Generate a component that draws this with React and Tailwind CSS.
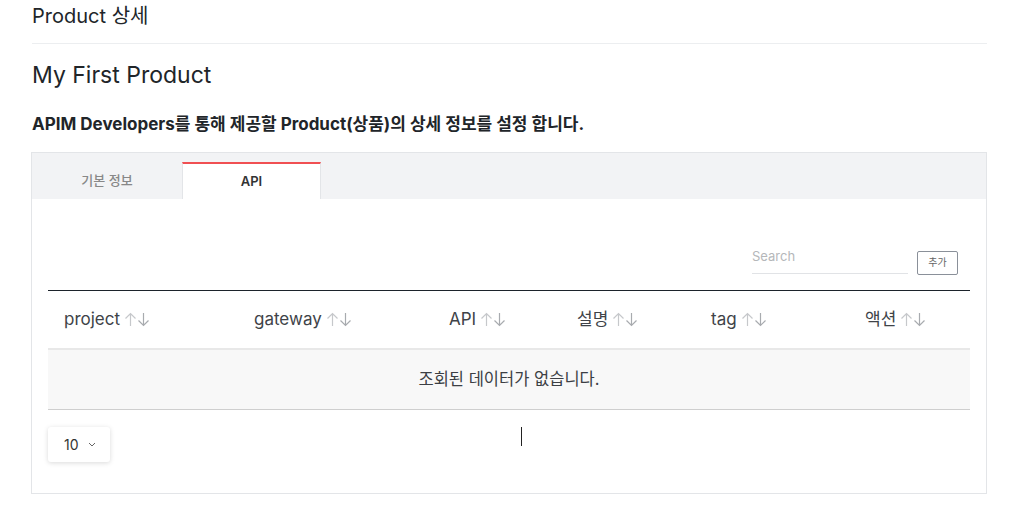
import { useState } from 'react';

const columns = [
  { key: 'project', label: 'project', width: 'w-[190px]' },
  { key: 'gateway', label: 'gateway', width: 'w-[195px]' },
  { key: 'api', label: 'API', width: 'w-[128px]' },
  { key: 'desc', label: '설명', width: 'w-[134px]' },
  { key: 'tag', label: 'tag', width: 'w-[154px]' },
  { key: 'action', label: '액션', width: 'w-[121px]' },
];

function SortIcon() {
  return (
    <span className="ml-[4px] inline-flex items-center">
      <svg width="13" height="15" viewBox="0 0 13 15" fill="none" stroke="#c6c8cb" strokeWidth="1.2">
        <path d="M6.5 14V1.5M1.5 6.5l5-5 5 5" />
      </svg>
      <svg width="13" height="15" viewBox="0 0 13 15" fill="none" stroke="#a8abaf" strokeWidth="1.2">
        <path d="M6.5 1V13.5M1.5 8.5l5 5 5-5" />
      </svg>
    </span>
  );
}

export default function App() {
  const [tab, setTab] = useState('api');
  const [search, setSearch] = useState('');

  return (
    <div
      className="min-h-screen bg-white text-[#212529]"
      style={{ fontFamily: 'Inter, "Noto Sans CJK KR", sans-serif' }}
    >
      <div className="mx-[32px] w-[955px] pt-[3px]">
        <h1 className="text-[20px] leading-[26px] pb-[14px] border-b border-[#eceef0]">Product 상세</h1>

        <h2 className="mt-[15px] text-[23px] leading-[32px]">My First Product</h2>

        <p className="mt-[22px] text-[17px] leading-[22px] font-bold">
          APIM Developers를 통해 제공할 Product(상품)의 상세 정보를 설정 합니다.
        </p>

        {/* tab card */}
        <div className="mt-[17px] -ml-px w-[956px] border border-[#e3e5e8]">
          <div className="flex h-[46px] items-end bg-[#f2f3f5]">
            <button
              onClick={() => setTab('info')}
              className={`h-[37px] w-[150px] text-[13px] ${tab === 'info' ? 'bg-white border-t-2 border-[#f04f52] font-semibold text-[#333]' : 'text-[#888] font-medium'}`}
            >
              기본 정보
            </button>
            <button
              onClick={() => setTab('api')}
              className={`h-[37px] w-[139px] text-[13px] ${tab === 'api' ? 'bg-white border-t-2 border-[#f04f52] font-semibold text-[#333] border-r border-r-[#e3e5e8] border-l border-l-[#e3e5e8]' : 'text-[#888] font-medium'}`}
            >
              API
            </button>
          </div>

          <div className="px-[16px] pt-[48px] pb-[31px]">
            <div className="flex items-end justify-end gap-[9px] pr-[12px]">
              <input
                value={search}
                onChange={(e) => setSearch(e.target.value)}
                placeholder="Search"
                className="w-[156px] border-b border-[#e1e3e6] pb-[6px] text-[13px] placeholder-[#b5b7ba] outline-none"
              />
              <button className="h-[24px] w-[41px] rounded-[2px] border border-[#8a9099] text-[10px] text-[#666] mb-[-1px]">
                추가
              </button>
            </div>

            <table className="mt-[16px] w-[922px] table-fixed border-collapse">
              <thead>
                <tr className="border-t border-[#1c232b] h-[59px]">
                  {columns.map((c) => (
                    <th
                      key={c.key}
                      className={`${c.width} px-[16px] pt-[1px] text-left text-[17px] font-normal text-[#404348] align-middle`}
                    >
                      <span className="inline-flex items-center">
                        {c.label}
                        <SortIcon />
                      </span>
                    </th>
                  ))}
                </tr>
              </thead>
              <tbody>
                <tr className="h-[60px] bg-[#f8f8f8] border-t-2 border-[#e8e8e8] border-b border-b-[#cfcfcf]">
                  <td colSpan={6} className="text-center text-[16.5px] text-[#3c3f44]">
                    조회된 데이터가 없습니다.
                  </td>
                </tr>
              </tbody>
            </table>

            <div className="relative mt-[17px] flex">
              <div className="flex h-[35px] w-[62px] items-center gap-[9px] rounded-[3px] bg-white pl-[16px] text-[14px] text-[#333] shadow-[0_1px_5px_rgba(0,0,0,0.15)]">
                10
                <svg width="8" height="5" viewBox="0 0 8 5" fill="none" stroke="#666" strokeWidth="1">
                  <path d="M1 1l3 3 3-3" />
                </svg>
              </div>
              <span className="absolute left-[473px] top-0 h-[19px] w-px bg-[#222]" />
            </div>
          </div>
        </div>
      </div>
    </div>
  );
}
